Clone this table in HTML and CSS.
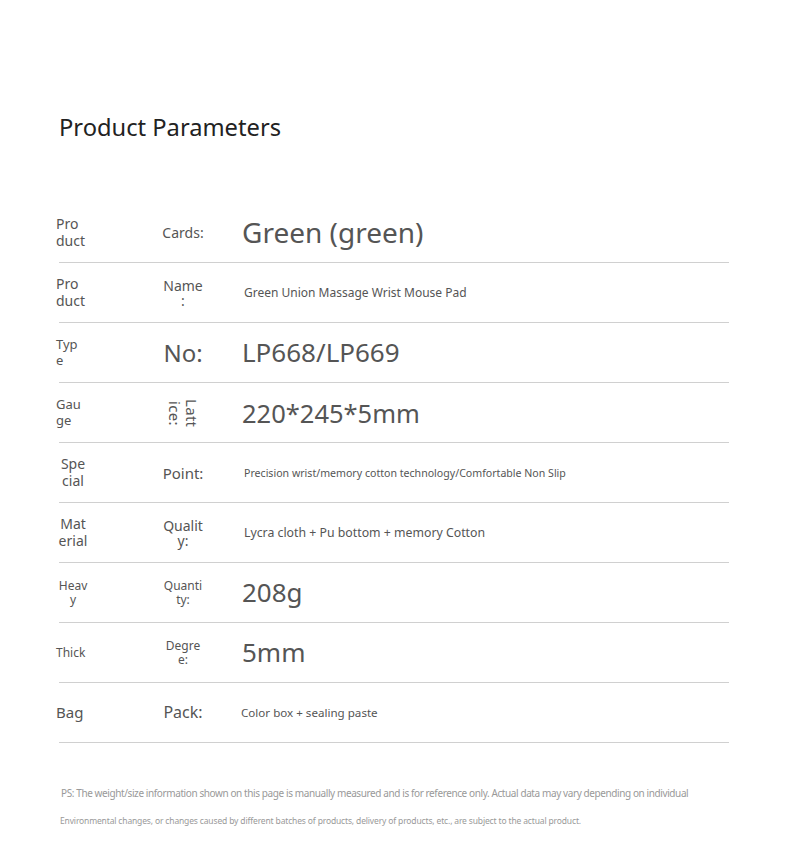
FILE: index.html
```html
<!DOCTYPE html>
<html>
<head>
<meta charset="utf-8">
<link rel="stylesheet" href="styles.css">
</head>
<body>
<div class="page">
  <h1 class="title">Product Parameters</h1>
  <div class="table">
    <div class="row">
      <div class="k1 s14">Pro<br>duct</div>
      <div class="k2 s14">Cards:</div>
      <div class="v s28">Green (green)</div>
    </div>
    <div class="row">
      <div class="k1 s14">Pro<br>duct</div>
      <div class="k2 s14 lh15">Name<br>:</div>
      <div class="v s12 ind">Green Union Massage Wrist Mouse Pad</div>
    </div>
    <div class="row">
      <div class="k1 s13">Typ<br>e</div>
      <div class="k2 s24">No:</div>
      <div class="v s26">LP668/LP669</div>
    </div>
    <div class="row">
      <div class="k1 s13">Gau<br>ge</div>
      <div class="k2"><span class="vert">Latt<br>ice:</span></div>
      <div class="v s25">220*245*5mm</div>
    </div>
    <div class="row">
      <div class="k1 s14 c">Spe<br>cial</div>
      <div class="k2 s15">Point:</div>
      <div class="v s10 ind">Precision wrist/memory cotton technology/Comfortable Non Slip</div>
    </div>
    <div class="row">
      <div class="k1 s14 c">Mat<br>erial</div>
      <div class="k2 s14 lh15">Qualit<br>y:</div>
      <div class="v s123 ind">Lycra cloth + Pu bottom + memory Cotton</div>
    </div>
    <div class="row">
      <div class="k1 s12 c lh14">Heav<br>y</div>
      <div class="k2 s12 lh14">Quanti<br>ty:</div>
      <div class="v s26">208g</div>
    </div>
    <div class="row">
      <div class="k1 s12">Thick</div>
      <div class="k2 s12 lh14">Degre<br>e:</div>
      <div class="v s26">5mm</div>
    </div>
    <div class="row">
      <div class="k1 s15 up">Bag</div>
      <div class="k2 s16">Pack:</div>
      <div class="v s116">Color box + sealing paste</div>
    </div>
  </div>
  <div class="note">
    <p class="n1">PS: The weight/size information shown on this page is manually measured and is for reference only. Actual data may vary depending on individual</p>
    <p class="n2">Environmental changes, or changes caused by different batches of products, delivery of products, etc., are subject to the actual product.</p>
  </div>
</div>
</body>
</html>
```

FILE: styles.css
```css
html, body {
  margin: 0;
  padding: 0;
  background: #fff;
}
body {
  font-family: "Noto Sans", "Open Sans", sans-serif;
  color: #555;
}
.page {
  width: 790px;
  padding-top: 107px;
}
.title {
  margin: 0 0 0 59px;
  font-size: 23.7px;
  font-weight: 400;
  line-height: 40px;
  color: #222;
}
.table {
  margin: 56px 0 0 56px;
  width: 673px;
}
.row {
  display: grid;
  grid-template-columns: 94px 66px 1fr;
  align-items: center;
  height: 60px;
  background: linear-gradient(#d0d0d0, #d0d0d0) no-repeat 3px 100% / 670px 1px;
}
.k1 {
  text-align: left;
  width: 34px;
  line-height: 1.2;
}
.k1.c { text-align: center; }
.k1.up { margin-top: -3px; }
.k2 {
  text-align: center;
  line-height: 1.2;
  display: flex;
  justify-content: center;
}
.lh15 { line-height: 15px; }
.lh14 { line-height: 14px; }
.vert {
  writing-mode: vertical-rl;
  font-size: 15px;
  line-height: 17px;
  letter-spacing: 0.3px;
}
.v {
  padding-left: 26px;
  white-space: nowrap;
  line-height: 1.2;
}
.v.ind { padding-left: 28px; }
.s10 { font-size: 10.6px; }
.s11 { font-size: 11px; }
.s116 { font-size: 11.6px; padding-left: 25px; }
.s12 { font-size: 12px; }
.s123 { font-size: 12.3px; }
.s13 { font-size: 13px; }
.s14 { font-size: 14px; }
.s15 { font-size: 15px; }
.s16 { font-size: 16px; }
.s24 { font-size: 24px; }
.s25 { font-size: 25.5px; }
.s26 { font-size: 26px; }
.s28 { font-size: 28px; }
.note {
  margin: 36px 0 0 60px;
  color: #999;
}
.note p {
  margin: 0;
  line-height: 28px;
  white-space: nowrap;
}
.note .n1 {
  margin-left: 1px;
  font-size: 10px;
  letter-spacing: -0.4px;
}
.note .n2 {
  font-size: 8.5px;
  letter-spacing: -0.15px;
}
```
